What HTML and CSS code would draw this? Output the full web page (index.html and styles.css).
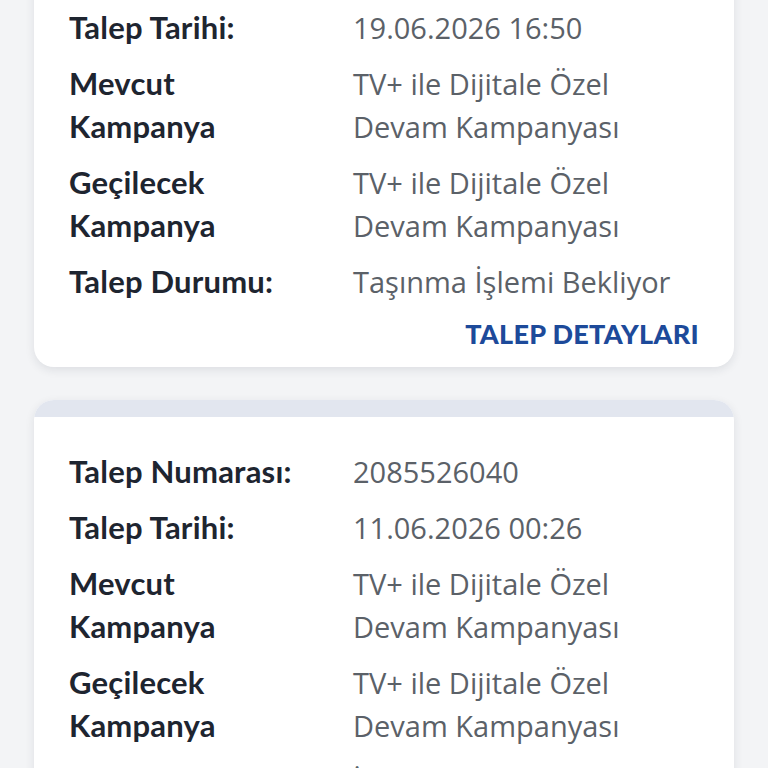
FILE: index.html
```html
<!DOCTYPE html>
<html lang="tr">
<head>
<meta charset="utf-8">
<link rel="stylesheet" href="styles.css">
</head>
<body>
<main class="list">
  <section class="card">
    <div class="card-band"></div>
    <div class="card-body">
      <dl class="rows">
        <dt>Talep Numarası:</dt><dd>2085530112</dd>
        <dt>Talep Tarihi:</dt><dd>19.06.2026 16:50</dd>
        <dt>Mevcut Kampanya</dt><dd>TV+ ile Dijitale Özel Devam Kampanyası</dd>
        <dt>Geçilecek Kampanya</dt><dd>TV+ ile Dijitale Özel Devam Kampanyası</dd>
        <dt>Talep Durumu:</dt><dd>Taşınma İşlemi Bekliyor</dd>
      </dl>
      <div class="actions"><a class="link" href="#">TALEP DETAYLARI</a></div>
    </div>
  </section>
  <section class="card">
    <div class="card-band"></div>
    <div class="card-body">
      <dl class="rows">
        <dt>Talep Numarası:</dt><dd>2085526040</dd>
        <dt>Talep Tarihi:</dt><dd>11.06.2026 00:26</dd>
        <dt>Mevcut Kampanya</dt><dd>TV+ ile Dijitale Özel Devam Kampanyası</dd>
        <dt>Geçilecek Kampanya</dt><dd>TV+ ile Dijitale Özel Devam Kampanyası</dd>
        <dt>Talep Durumu:</dt><dd>İptal Edildi</dd>
      </dl>
      <div class="actions"><a class="link" href="#">TALEP DETAYLARI</a></div>
    </div>
  </section>
</main>
</body>
</html>
```

FILE: styles.css
```css
html, body {
  margin: 0;
  padding: 0;
  background: #f3f4f6;
  overflow: hidden;
}
body {
  font-family: Lato, "Noto Sans", sans-serif;
}
.list {
  display: flex;
  flex-direction: column;
  gap: 33px;
  padding: 0 34px;
  margin-top: -100px;
}
.card {
  background: #ffffff;
  border-radius: 20px;
  overflow: hidden;
  box-shadow: 0 3px 10px rgba(30, 40, 60, 0.10);
}
.card-band {
  height: 17px;
  background: #e2e6ef;
}
.card-body {
  padding: 33px 35px 17px 35px;
}
.rows {
  display: grid;
  grid-template-columns: 284px 1fr;
  row-gap: 13px;
  margin: 0;
}
.rows dt {
  font-weight: 700;
  font-size: 31px;
  letter-spacing: 0.2px;
  line-height: 43px;
  color: #1e2530;
  padding-right: 40px;
}
.rows dd {
  margin: 0;
  font-family: "Open Sans", Lato, sans-serif;
  font-size: 29px;
  line-height: 43px;
  color: #5b6168;
}
.actions {
  display: flex;
  justify-content: flex-end;
  margin-top: 15px;
}
.link {
  font-weight: 900;
  font-size: 27px;
  letter-spacing: 0.3px;
  line-height: 32px;
  color: #1d4a9a;
  text-decoration: none;
}
```
